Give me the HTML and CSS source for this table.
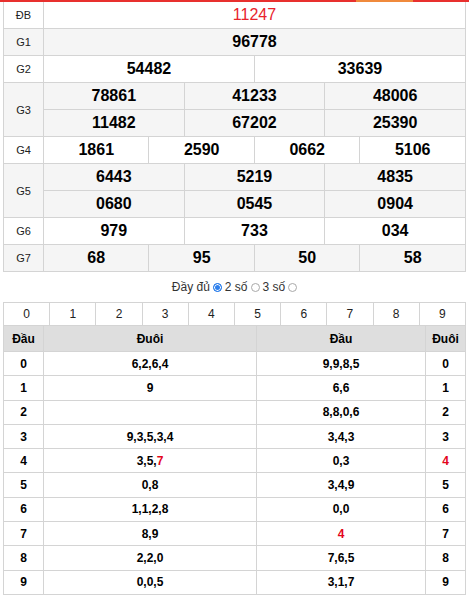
FILE: index.html
```html
<!DOCTYPE html>
<html lang="vi">
<head>
<meta charset="utf-8">
<title>KQXS</title>
<link rel="stylesheet" href="styles.css">
</head>
<body>
<div class="topbar"><span class="seg seg-a"></span><span class="seg seg-b"></span><span class="seg seg-c"></span></div>
<table class="kq">
  <colgroup><col class="c-label"><col span="12"></colgroup>
  <tr><td class="lbl">ĐB</td><td colspan="12" class="db">11247</td></tr>
  <tr class="alt"><td class="lbl">G1</td><td colspan="12">96778</td></tr>
  <tr><td class="lbl">G2</td><td colspan="6">54482</td><td colspan="6">33639</td></tr>
  <tr class="alt"><td class="lbl" rowspan="2">G3</td><td colspan="4">78861</td><td colspan="4">41233</td><td colspan="4">48006</td></tr>
  <tr class="alt"><td colspan="4">11482</td><td colspan="4">67202</td><td colspan="4">25390</td></tr>
  <tr><td class="lbl">G4</td><td colspan="3">1861</td><td colspan="3">2590</td><td colspan="3">0662</td><td colspan="3">5106</td></tr>
  <tr class="alt"><td class="lbl" rowspan="2">G5</td><td colspan="4">6443</td><td colspan="4">5219</td><td colspan="4">4835</td></tr>
  <tr class="alt"><td colspan="4">0680</td><td colspan="4">0545</td><td colspan="4">0904</td></tr>
  <tr><td class="lbl">G6</td><td colspan="4">979</td><td colspan="4">733</td><td colspan="4">034</td></tr>
  <tr class="alt"><td class="lbl">G7</td><td colspan="3">68</td><td colspan="3">95</td><td colspan="3">50</td><td colspan="3">58</td></tr>
</table>
<div class="mode">Đầy đủ <span class="radio on"></span> 2 số <span class="radio"></span> 3 số <span class="radio"></span></div>
<table class="digits">
  <tr><td>0</td><td>1</td><td>2</td><td>3</td><td>4</td><td>5</td><td>6</td><td>7</td><td>8</td><td>9</td></tr>
</table>
<table class="loto">
  <colgroup><col class="c-idx"><col class="c-mid1"><col class="c-mid2"><col class="c-idx"></colgroup>
  <tr class="head"><th>Đầu</th><th>Đuôi</th><th>Đầu</th><th>Đuôi</th></tr>
  <tr><td>0</td><td>6,2,6,4</td><td>9,9,8,5</td><td>0</td></tr>
  <tr><td>1</td><td>9</td><td>6,6</td><td>1</td></tr>
  <tr><td>2</td><td></td><td>8,8,0,6</td><td>2</td></tr>
  <tr><td>3</td><td>9,3,5,3,4</td><td>3,4,3</td><td>3</td></tr>
  <tr><td>4</td><td>3,5,<span class="red">7</span></td><td>0,3</td><td class="red">4</td></tr>
  <tr><td>5</td><td>0,8</td><td>3,4,9</td><td>5</td></tr>
  <tr><td>6</td><td>1,1,2,8</td><td>0,0</td><td>6</td></tr>
  <tr><td>7</td><td>8,9</td><td class="red">4</td><td>7</td></tr>
  <tr><td>8</td><td>2,2,0</td><td>7,6,5</td><td>8</td></tr>
  <tr><td>9</td><td>0,0,5</td><td>3,1,7</td><td>9</td></tr>
</table>
</body>
</html>
```
FILE: styles.css
```css
html, body {
  margin: 0;
  padding: 0;
  background: #fff;
}
body {
  font-family: "Liberation Sans", Arial, sans-serif;
  color: #000;
}
.topbar {
  display: flex;
  height: 2px;
}
.seg { display: block; height: 2px; }
.seg-a { width: 356px; background: #e8302e; }
.seg-b { width: 57px; background: #f08a3c; }
.seg-c { flex: 1; background: #e8302e; }

table {
  border-collapse: collapse;
  table-layout: fixed;
  width: 463px;
  margin: 0 3px;
}
td, th {
  border: 1px solid #d4d4d4;
  padding: 0;
  text-align: center;
}
.kq .c-label { width: 40px; }
.kq td {
  height: 26px;
  font-size: 16px;
  font-weight: bold;
}
.kq tr:first-child td { border-top: 0; height: 26px; }
.kq .alt td { background: #f5f5f5; }
.kq td.lbl {
  font-size: 11px;
  font-weight: normal;
  color: #222;
}
.kq td.db {
  color: #e8232b;
  font-weight: normal;
}
.mode {
  height: 30px;
  display: flex;
  align-items: center;
  justify-content: center;
  gap: 3px;
  font-size: 12px;
  color: #333;
}
.radio {
  display: inline-block;
  width: 7px;
  height: 7px;
  border-radius: 50%;
  border: 1px solid #a9a9a9;
  background: #fff;
  box-sizing: content-box;
}
.radio.on {
  border-color: #1a73e8;
  background: #2f80ed;
  box-shadow: inset 0 0 0 1px #fff;
}
.digits td {
  height: 22px;
  font-size: 12px;
  color: #222;
}
.loto { border-top: 0; }
.loto .c-idx { width: 40px; }
.loto .c-mid1 { width: 213px; }
.loto .c-mid2 { width: 169px; }
.loto th {
  border-top: 0;
  height: 25px;
  background: #dedede;
  font-size: 12px;
  font-weight: bold;
}
.loto td {
  height: 23.3px;
  font-size: 12px;
  font-weight: bold;
}
.red { color: #e3051b; }
```
